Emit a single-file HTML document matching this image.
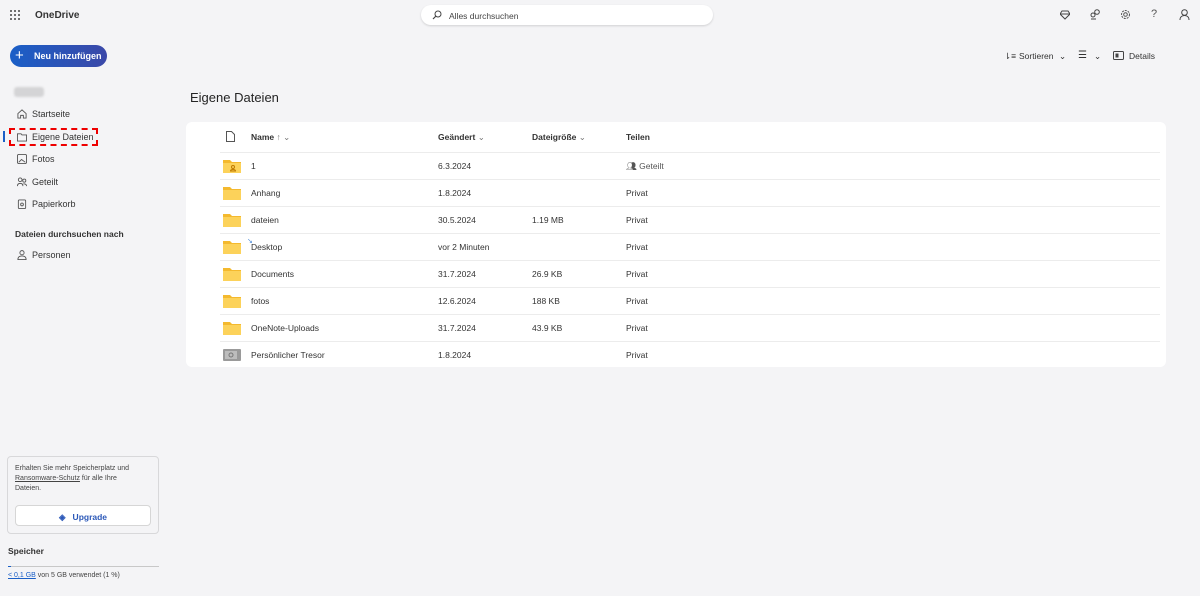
<!DOCTYPE html>
<html><head><meta charset="utf-8"><style>
*{box-sizing:border-box;margin:0;padding:0}
body{width:1200px;height:596px;background:#f4f4f6;font-family:"Liberation Sans",sans-serif;font-size:9px;color:#242424;position:relative;overflow:hidden}
.abs{position:absolute}
.nav{position:absolute;left:17px;display:flex;align-items:center;gap:5px;font-size:9px;color:#333}
.nav svg{width:10px;height:10px}
.card{position:absolute;left:186px;top:122px;width:980px;height:245px;background:#fff;border-radius:6px}
.row{position:absolute;left:34px;width:940px;height:27px;border-top:1px solid #ececec;font-size:8.5px;color:#333}
.row span{position:absolute;top:8px}
.fold{position:absolute;left:3px;top:6px;width:18px;height:14px}
.c1{left:31px}.c2{left:218px}.c3{left:312px}.c4{left:406px}
.hd{position:absolute;top:10px;font-size:8.5px;font-weight:bold;color:#333}
.tb{position:absolute;top:51px;font-size:8.5px;color:#333}
</style></head><body>
<svg class="abs" style="left:10px;top:10px" width="10" height="10"><g fill="#444"><circle cx="1" cy="1" r="1"/><circle cx="5" cy="1" r="1"/><circle cx="9" cy="1" r="1"/><circle cx="1" cy="5" r="1"/><circle cx="5" cy="5" r="1"/><circle cx="9" cy="5" r="1"/><circle cx="1" cy="9" r="1"/><circle cx="5" cy="9" r="1"/><circle cx="9" cy="9" r="1"/></g></svg>
<div class="abs" style="left:35px;top:10px;font-size:10px;font-weight:bold;color:#333">OneDrive</div>
<div class="abs" style="left:421px;top:5px;width:292px;height:20px;background:#fff;border-radius:10px;box-shadow:0 1px 2px rgba(0,0,0,.15)"></div>
<svg class="abs" style="left:432px;top:10px" width="10" height="10"><circle cx="6" cy="4" r="3" fill="none" stroke="#444" stroke-width="1"/><path d="M4 6L1 9" stroke="#444" stroke-width="1.2"/></svg>
<div class="abs" style="left:449px;top:11px;font-size:8.5px;color:#444">Alles durchsuchen</div>
<svg class="abs" style="left:1060px;top:10px" width="10" height="10"><path d="M2 1h6l2 3-5 5-5-5z" fill="none" stroke="#444"/><path d="M0 4h10" stroke="#444"/></svg>
<svg class="abs" style="left:1090px;top:9px" width="11" height="11"><circle cx="7" cy="3" r="2.3" fill="none" stroke="#444"/><circle cx="3" cy="6" r="2" fill="none" stroke="#444"/><path d="M1 10h5" stroke="#444"/></svg>
<svg class="abs" style="left:1120px;top:9px" width="11" height="11"><circle cx="5.5" cy="5.5" r="4" fill="none" stroke="#555" stroke-dasharray="2 1"/><circle cx="5.5" cy="5.5" r="1.8" fill="none" stroke="#555"/></svg>
<div class="abs" style="left:1151px;top:8px;font-size:11px;color:#555">?</div>
<svg class="abs" style="left:1179px;top:9px" width="11" height="12"><circle cx="5.5" cy="3.5" r="2.8" fill="none" stroke="#444"/><path d="M1 11c0-3 2-4.5 4.5-4.5S10 8 10 11" fill="none" stroke="#444"/></svg>
<div class="abs" style="left:10px;top:45px;width:97px;height:22px;border-radius:11px;background:linear-gradient(90deg,#1a5fc7,#3b48a8);color:#fff;font-weight:bold;font-size:9px;padding:6px 0 0 24px">Neu hinzufügen</div>
<div class="abs" style="left:15px;top:47px;color:#fff;font-size:15px;line-height:17px">+</div>
<div class="abs" style="left:14px;top:87px;width:30px;height:10px;background:#d4d4d6;border-radius:3px;filter:blur(1px)"></div>
<div class="nav" style="top:109px"><svg viewBox="0 0 11 11"><path d="M1 5L5.5 1 10 5v5H7V7H4v3H1z" fill="none" stroke="#555"/></svg>Startseite</div>
<div class="abs" style="left:3px;top:131px;width:2px;height:11px;background:#1a5fc7"></div>
<div class="abs" style="left:9px;top:128px;width:89px;height:18px;border:2px dashed #e00"></div>
<div class="nav" style="top:132px"><svg viewBox="0 0 11 11"><path d="M0.5 2h4l1 1.2h5V10h-10z" fill="none" stroke="#555"/></svg>Eigene Dateien</div>
<div class="nav" style="top:154px"><svg viewBox="0 0 11 11"><rect x=".5" y=".5" width="10" height="10" rx="1.5" fill="none" stroke="#555"/><path d="M2 9l3-3 4 3" fill="none" stroke="#555"/></svg>Fotos</div>
<div class="nav" style="top:177px"><svg viewBox="0 0 11 11"><circle cx="3.5" cy="3" r="2" fill="none" stroke="#555"/><circle cx="8" cy="4" r="1.7" fill="none" stroke="#555"/><path d="M.5 10c0-2 1-3 3-3s3 1 3 3M7 7.5c2 0 3.5.5 3.5 2.5" fill="none" stroke="#555"/></svg>Geteilt</div>
<div class="nav" style="top:199px"><svg viewBox="0 0 11 11"><rect x="1.5" y="1" width="8" height="9.5" rx="1" fill="none" stroke="#555"/><circle cx="5.5" cy="6" r="1.5" fill="none" stroke="#555"/></svg>Papierkorb</div>
<div class="abs" style="left:15px;top:229px;font-size:8.5px;font-weight:bold;color:#333">Dateien durchsuchen nach</div>
<div class="nav" style="top:250px"><svg viewBox="0 0 11 11"><circle cx="5.5" cy="3" r="2.3" fill="none" stroke="#555"/><path d="M1 10.5c0-3 2-4 4.5-4s4.5 1 4.5 4z" fill="none" stroke="#555"/></svg>Personen</div>
<div class="abs" style="left:7px;top:456px;width:152px;height:78px;border:1px solid #d8d8da;border-radius:4px;background:#f4f4f6"></div>
<div class="abs" style="left:15px;top:464px;font-size:7px;line-height:10px;color:#444;width:126px">Erhalten Sie mehr Speicherplatz und <u>Ransomware-Schutz</u> für alle Ihre Dateien.</div>
<div class="abs" style="left:15px;top:505px;width:136px;height:21px;background:#fff;border:1px solid #d6d6d6;border-radius:4px;text-align:center;padding-top:6px;font-weight:bold;color:#2b58b8;font-size:8.5px">◈&nbsp;&nbsp; Upgrade</div>
<div class="abs" style="left:8px;top:546px;font-size:8.5px;font-weight:bold;color:#333">Speicher</div>
<div class="abs" style="left:8px;top:566px;width:151px;height:1px;background:#c8c8c8"></div>
<div class="abs" style="left:8px;top:566px;width:3px;height:1px;background:#1a5fc7"></div>
<div class="abs" style="left:8px;top:572px;font-size:7px;color:#444"><u style="color:#1a5fc7">&lt; 0,1 GB</u> von 5 GB verwendet (1 %)</div>
<div class="tb" style="left:1004px">⇂≡</div>
<div class="tb" style="left:1019px">Sortieren</div>
<div class="tb" style="left:1059px">⌄</div>
<div class="tb" style="left:1078px;font-size:10px;top:50px">☰</div>
<div class="tb" style="left:1094px">⌄</div>
<svg class="abs" style="left:1113px;top:51px" width="11" height="10"><rect x=".5" y=".5" width="10" height="8" rx="1" fill="none" stroke="#444"/><rect x="2.5" y="2.5" width="3" height="4" fill="#444"/></svg>
<div class="tb" style="left:1129px">Details</div>
<div class="abs" style="left:190px;top:90px;font-size:13px;color:#242424">Eigene Dateien</div>
<div class="card">
<svg class="abs" style="left:40px;top:9px" width="9" height="11"><path d="M.5.5h5l3 3v7h-8z" fill="none" stroke="#555"/></svg>
<div class="hd" style="left:65px">Name <span style="font-weight:normal;color:#777">↑ ⌄</span></div>
<div class="hd" style="left:252px">Geändert <span style="font-weight:normal;color:#777">⌄</span></div>
<div class="hd" style="left:346px">Dateigröße <span style="font-weight:normal;color:#777">⌄</span></div>
<div class="hd" style="left:440px">Teilen</div>
<div class="row" style="top:30px"><svg class="fold" viewBox="0 0 18 14"><path d="M0 1h7l2 2h9v11H0z" fill="#f4b92e"/><path d="M0 4h18v10H0z" fill="#fcd25a"/><circle cx="10" cy="8" r="1.5" fill="none" stroke="#c07a00"/><path d="M7.5 12c0-2 5-2 5 0z" fill="none" stroke="#c07a00"/></svg><span class="c1">1</span><span class="c2">6.3.2024</span><span class="c4" style="color:#555">👥︎ Geteilt</span></div>
<div class="row" style="top:57px"><svg class="fold" viewBox="0 0 18 14"><path d="M0 1h7l2 2h9v11H0z" fill="#f4b92e"/><path d="M0 4h18v10H0z" fill="#fcd25a"/></svg><span class="c1">Anhang</span><span class="c2">1.8.2024</span><span class="c4">Privat</span></div>
<div class="row" style="top:84px"><svg class="fold" viewBox="0 0 18 14"><path d="M0 1h7l2 2h9v11H0z" fill="#f4b92e"/><path d="M0 4h18v10H0z" fill="#fcd25a"/></svg><span class="c1">dateien</span><span class="c2">30.5.2024</span><span class="c3">1.19 MB</span><span class="c4">Privat</span></div>
<div class="row" style="top:111px"><svg class="fold" viewBox="0 0 18 14"><path d="M0 1h7l2 2h9v11H0z" fill="#f4b92e"/><path d="M0 4h18v10H0z" fill="#fcd25a"/></svg><span style="left:27px;top:3px;color:#4a8ad8;font-size:7px">↘</span><span class="c1">Desktop</span><span class="c2">vor 2 Minuten</span><span class="c4">Privat</span></div>
<div class="row" style="top:138px"><svg class="fold" viewBox="0 0 18 14"><path d="M0 1h7l2 2h9v11H0z" fill="#f4b92e"/><path d="M0 4h18v10H0z" fill="#fcd25a"/></svg><span class="c1">Documents</span><span class="c2">31.7.2024</span><span class="c3">26.9 KB</span><span class="c4">Privat</span></div>
<div class="row" style="top:165px"><svg class="fold" viewBox="0 0 18 14"><path d="M0 1h7l2 2h9v11H0z" fill="#f4b92e"/><path d="M0 4h18v10H0z" fill="#fcd25a"/></svg><span class="c1">fotos</span><span class="c2">12.6.2024</span><span class="c3">188 KB</span><span class="c4">Privat</span></div>
<div class="row" style="top:192px"><svg class="fold" viewBox="0 0 18 14"><path d="M0 1h7l2 2h9v11H0z" fill="#f4b92e"/><path d="M0 4h18v10H0z" fill="#fcd25a"/></svg><span class="c1">OneNote-Uploads</span><span class="c2">31.7.2024</span><span class="c3">43.9 KB</span><span class="c4">Privat</span></div>
<div class="row" style="top:219px"><svg class="fold" viewBox="0 0 18 14"><rect x="0" y="1" width="18" height="12" rx="1" fill="#9a9a9a"/><rect x="2" y="3" width="12" height="8" fill="#bdbdbd"/><circle cx="8" cy="7" r="2" fill="none" stroke="#777"/></svg><span class="c1">Persönlicher Tresor</span><span class="c2">1.8.2024</span><span class="c4">Privat</span></div>
</div>
</body></html>
